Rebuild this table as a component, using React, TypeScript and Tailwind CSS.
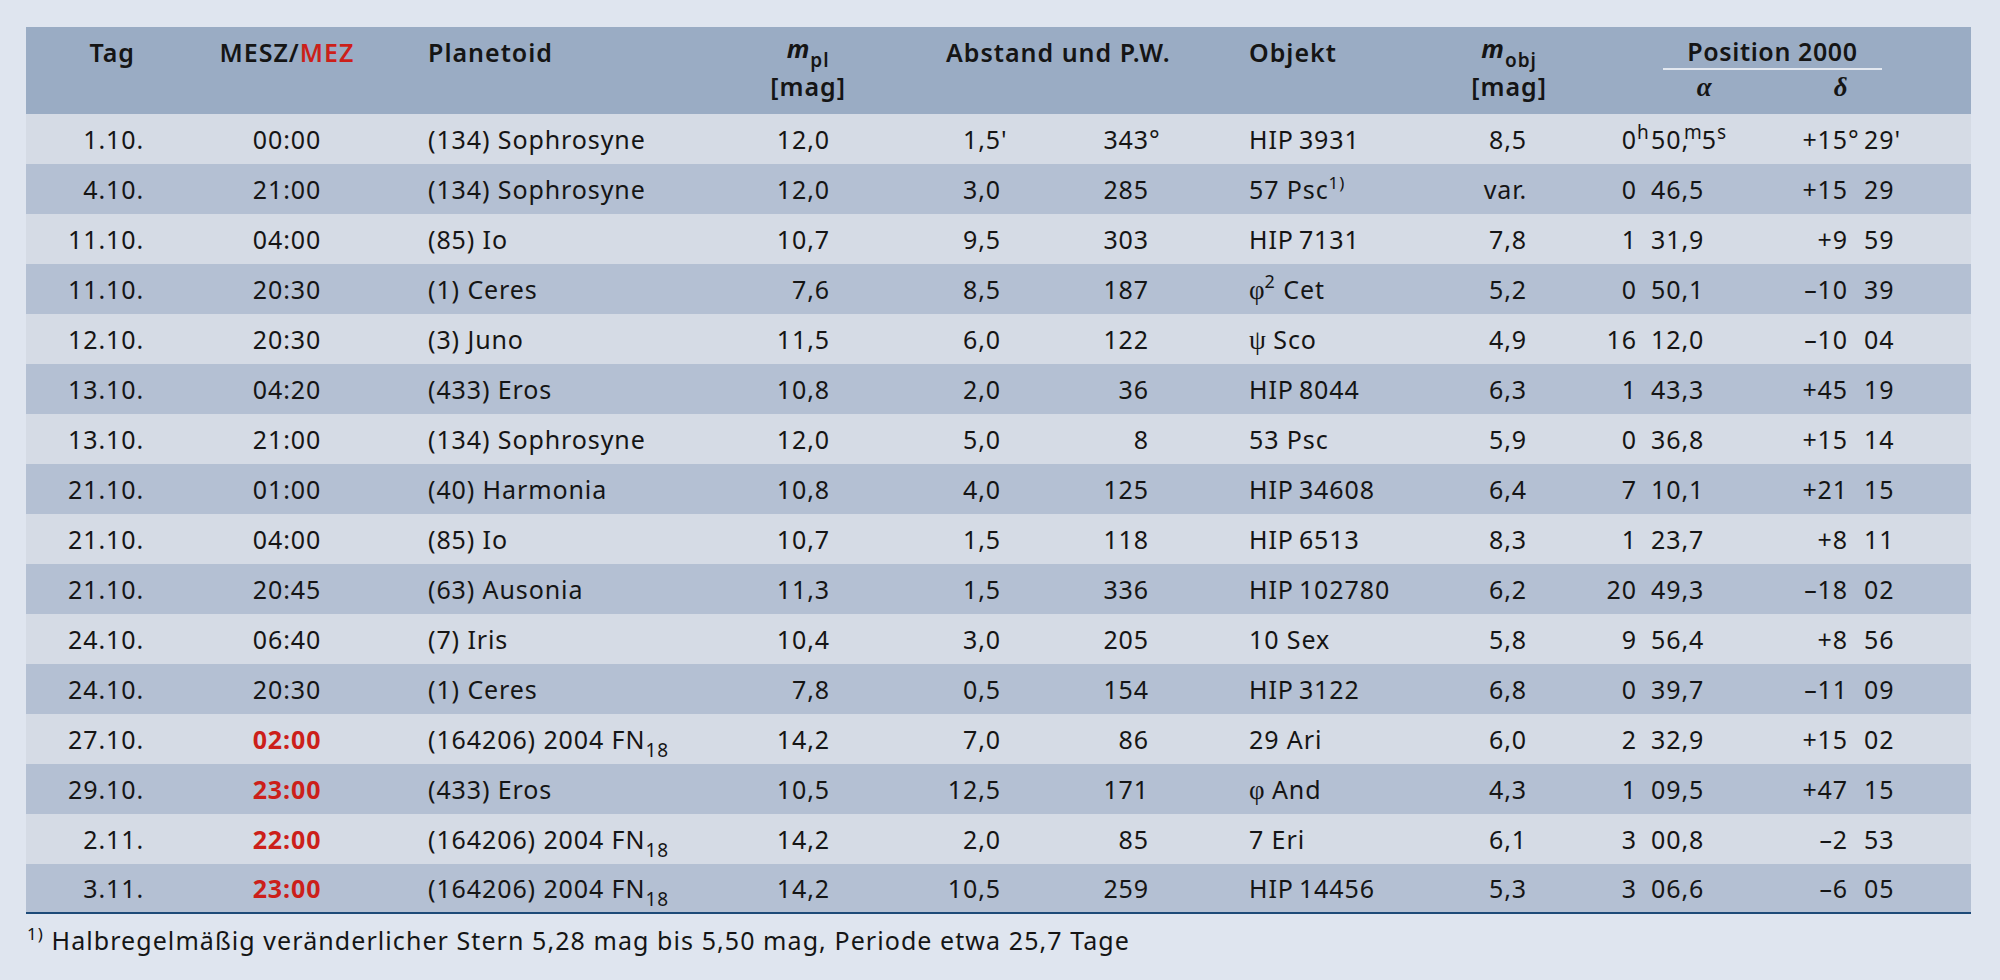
import React from "react";

type Row = {
  tag: string;
  time: string;
  red?: boolean;
  planet: React.ReactNode;
  mpl: string;
  dist: React.ReactNode;
  pw: React.ReactNode;
  obj: React.ReactNode;
  mobj: string;
  ah: React.ReactNode;
  am: React.ReactNode;
  dd: React.ReactNode;
  dm: React.ReactNode;
};

const FN = (
  <>
    (164206) 2004 FN<sub className="text-[19px] bottom-[-0.4em]">18</sub>
  </>
);

const Greek = ({ c }: { c: string }) => (
  <span className="font-['Liberation_Serif','DejaVu_Serif',serif] text-[27px] tracking-normal">{c}</span>
);

const rows: Row[] = [
  {
    tag: "1.10.",
    time: "00:00",
    planet: "(134) Sophrosyne",
    mpl: "12,0",
    dist: (
      <>
        1,5<span className="inline-block w-0">'</span>
      </>
    ),
    pw: (
      <>
        343<span className="inline-block w-0">°</span>
      </>
    ),
    obj: "HIP\u20093931",
    mobj: "8,5",
    ah: (
      <>
        0<sup className="inline-block w-0 text-[19px] text-left top-[-0.55em] tracking-normal">h</sup>
      </>
    ),
    am: (
      <>
        50,<sup className="-ml-[5px] text-[19px] top-[-0.55em] tracking-normal">m</sup>5
        <sup className="text-[19px] top-[-0.55em]">s</sup>
      </>
    ),
    dd: (
      <>
        +15<span className="inline-block w-0">°</span>
      </>
    ),
    dm: (
      <>
        29<span className="inline-block w-0">'</span>
      </>
    ),
  },
  {
    tag: "4.10.",
    time: "21:00",
    planet: "(134) Sophrosyne",
    mpl: "12,0",
    dist: "3,0",
    pw: "285",
    obj: (
      <>
        57 Psc<sup className="text-[17px] top-[-0.6em]">1)</sup>
      </>
    ),
    mobj: "var.",
    ah: "0",
    am: "46,5",
    dd: "+15",
    dm: "29",
  },
  { tag: "11.10.", time: "04:00", planet: "(85) Io", mpl: "10,7", dist: "9,5", pw: "303", obj: "HIP\u20097131", mobj: "7,8", ah: "1", am: "31,9", dd: "+9", dm: "59" },
  {
    tag: "11.10.",
    time: "20:30",
    planet: "(1) Ceres",
    mpl: "7,6",
    dist: "8,5",
    pw: "187",
    obj: (
      <>
        <Greek c="φ" />
        <sup className="text-[18px] top-[-0.6em]">2</sup> Cet
      </>
    ),
    mobj: "5,2",
    ah: "0",
    am: "50,1",
    dd: "–10",
    dm: "39",
  },
  {
    tag: "12.10.",
    time: "20:30",
    planet: "(3) Juno",
    mpl: "11,5",
    dist: "6,0",
    pw: "122",
    obj: (
      <>
        <Greek c="ψ" /> Sco
      </>
    ),
    mobj: "4,9",
    ah: "16",
    am: "12,0",
    dd: "–10",
    dm: "04",
  },
  { tag: "13.10.", time: "04:20", planet: "(433) Eros", mpl: "10,8", dist: "2,0", pw: "36", obj: "HIP\u20098044", mobj: "6,3", ah: "1", am: "43,3", dd: "+45", dm: "19" },
  { tag: "13.10.", time: "21:00", planet: "(134) Sophrosyne", mpl: "12,0", dist: "5,0", pw: "8", obj: "53 Psc", mobj: "5,9", ah: "0", am: "36,8", dd: "+15", dm: "14" },
  { tag: "21.10.", time: "01:00", planet: "(40) Harmonia", mpl: "10,8", dist: "4,0", pw: "125", obj: "HIP\u200934608", mobj: "6,4", ah: "7", am: "10,1", dd: "+21", dm: "15" },
  { tag: "21.10.", time: "04:00", planet: "(85) Io", mpl: "10,7", dist: "1,5", pw: "118", obj: "HIP\u20096513", mobj: "8,3", ah: "1", am: "23,7", dd: "+8", dm: "11" },
  { tag: "21.10.", time: "20:45", planet: "(63) Ausonia", mpl: "11,3", dist: "1,5", pw: "336", obj: "HIP\u2009102780", mobj: "6,2", ah: "20", am: "49,3", dd: "–18", dm: "02" },
  { tag: "24.10.", time: "06:40", planet: "(7) Iris", mpl: "10,4", dist: "3,0", pw: "205", obj: "10 Sex", mobj: "5,8", ah: "9", am: "56,4", dd: "+8", dm: "56" },
  { tag: "24.10.", time: "20:30", planet: "(1) Ceres", mpl: "7,8", dist: "0,5", pw: "154", obj: "HIP\u20093122", mobj: "6,8", ah: "0", am: "39,7", dd: "–11", dm: "09" },
  { tag: "27.10.", time: "02:00", red: true, planet: FN, mpl: "14,2", dist: "7,0", pw: "86", obj: "29 Ari", mobj: "6,0", ah: "2", am: "32,9", dd: "+15", dm: "02" },
  {
    tag: "29.10.",
    time: "23:00",
    red: true,
    planet: "(433) Eros",
    mpl: "10,5",
    dist: "12,5",
    pw: "171",
    obj: (
      <>
        <Greek c="φ" /> And
      </>
    ),
    mobj: "4,3",
    ah: "1",
    am: "09,5",
    dd: "+47",
    dm: "15",
  },
  { tag: "2.11.", time: "22:00", red: true, planet: FN, mpl: "14,2", dist: "2,0", pw: "85", obj: "7 Eri", mobj: "6,1", ah: "3", am: "00,8", dd: "–2", dm: "53" },
  { tag: "3.11.", time: "23:00", red: true, planet: FN, mpl: "14,2", dist: "10,5", pw: "259", obj: "HIP\u200914456", mobj: "5,3", ah: "3", am: "06,6", dd: "–6", dm: "05" },
];

const cols =
  "grid grid-cols-[144px_234px_336px_110px_170px_205px_215px_140px_192px_199px]";

export default function App() {
  return (
    <div className="min-h-[980px] w-full bg-[#dfe5ef] pt-[27px] pl-[26px] font-['Noto_Sans',sans-serif] text-[25px] leading-[34px] tracking-[0.9px] text-[#151515]">
      <div className="w-[1945px]">
        {/* header */}
        <div className={`${cols} h-[87px] items-start bg-[#9aacc4] pt-[8px] font-semibold tracking-[1px]`}>
          <div className="pr-[35px] text-right">Tag</div>
          <div className="text-center">
            MESZ/<span className="text-[#cc1f1a]">MEZ</span>
          </div>
          <div className="pl-[24px]">Planetoid</div>
          <div className="flex justify-end pr-[4px]">
            <div className="flex flex-col items-center">
              <span className="relative -top-[4px]">
                <span className="italic font-bold">m</span>
                <sub className="text-[19px] bottom-[-0.45em]">pl</sub>
              </span>
              <span>[mag]</span>
            </div>
          </div>
          <div className="col-span-2 pl-[96px]">Abstand und P.W.</div>
          <div className="pl-[24px]">Objekt</div>
          <div className="flex justify-end pr-[33px]">
            <div className="flex flex-col items-center">
              <span className="relative -top-[4px]">
                <span className="italic font-bold">m</span>
                <sub className="text-[19px] bottom-[-0.45em]">obj</sub>
              </span>
              <span>[mag]</span>
            </div>
          </div>
          <div className="col-span-2 pl-[83px]">
            <div className="w-[219px]">
              <div className="border-b-2 border-[#e3e8f0] text-center leading-[33px] tracking-[0.6px]">Position 2000</div>
              <div className="flex font-['Liberation_Serif','DejaVu_Serif',serif] text-[27px] font-bold italic tracking-normal">
                <span className="w-[84px] text-center">α</span>
                <span className="ml-[54px] w-[84px] text-center">δ</span>
              </div>
            </div>
          </div>
        </div>

        {/* body */}
        <div>
          {rows.map((r, i) => (
            <div
              key={i}
              className={`${cols} h-[50px] items-center ${
                i % 2 === 0 ? "bg-[#d5dbe5]" : "bg-[#b4c0d3]"
              } ${i === rows.length - 1 ? "border-b-2 border-[#1d4a78]" : ""}`}
            >
              <div className="pr-[26px] text-right">{r.tag}</div>
              <div className={`text-center ${r.red ? "font-bold text-[#cc1f1a]" : ""}`}>{r.time}</div>
              <div className="pl-[24px] whitespace-nowrap">{r.planet}</div>
              <div className="pr-[20px] text-right">{r.mpl}</div>
              <div className="pr-[19px] text-right">{r.dist}</div>
              <div className="pr-[76px] text-right">{r.pw}</div>
              <div className="pl-[24px] whitespace-nowrap">{r.obj}</div>
              <div className="pr-[53px] text-right">{r.mobj}</div>
              <div className="flex whitespace-nowrap">
                <span className="w-[57px] text-right">{r.ah}</span>
                <span className="ml-[14px]">{r.am}</span>
              </div>
              <div className="flex whitespace-nowrap">
                <span className="w-[76px] text-right">{r.dd}</span>
                <span className="ml-[16px]">{r.dm}</span>
              </div>
            </div>
          ))}
        </div>

        {/* footnote */}
        <div className="mt-[9px] pl-[1px] tracking-[1.07px]">
          <sup className="text-[17px] top-[-0.6em]">1)</sup> Halbregelmäßig veränderlicher Stern 5,28 mag bis 5,50 mag, Periode etwa 25,7 Tage
        </div>
      </div>
    </div>
  );
}
